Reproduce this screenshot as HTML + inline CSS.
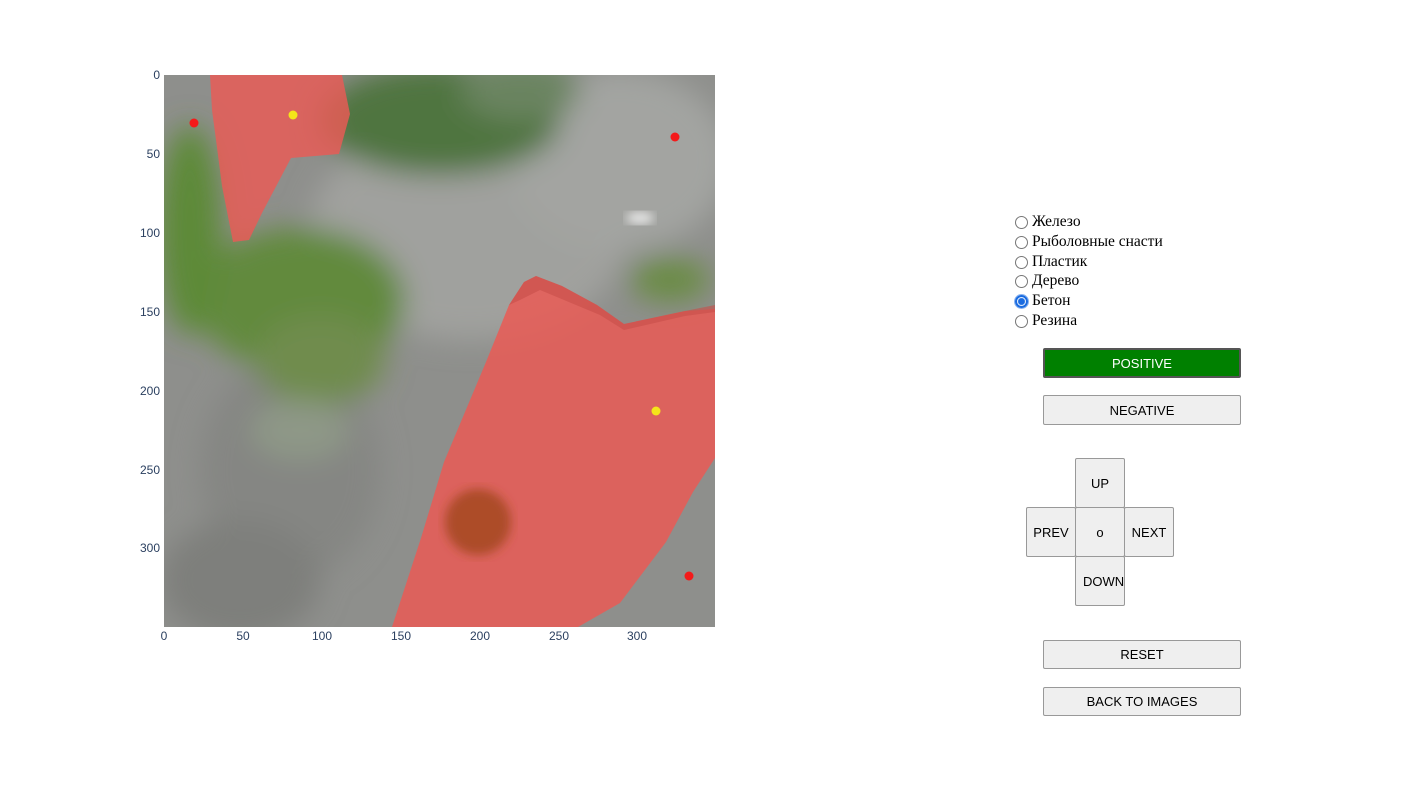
<!DOCTYPE html>
<html><head><meta charset="utf-8"><style>
body{margin:0;width:1417px;height:799px;background:#fff;position:relative;overflow:hidden;font-family:"Liberation Sans",sans-serif}
.yl{position:absolute;left:118px;width:42px;text-align:right;font-size:12px;color:#2a3f5f}
.xl{position:absolute;top:629px;width:40px;text-align:center;font-size:12px;color:#2a3f5f}
.rad{position:absolute;left:1015px;font-family:"Liberation Serif",serif;font-size:15.5px;color:#000;display:flex;align-items:center}
.rad i{display:inline-block;width:11px;height:11px;border:1px solid #777;border-radius:50%;margin-right:4px;background:#fff}
.btn{position:absolute;box-sizing:border-box;border:1px solid #999;border-radius:2px;background:#efefef;font-size:13px;color:#000;display:flex;align-items:center;justify-content:center}
</style></head><body>
<svg style="position:absolute;left:164px;top:75px" width="551" height="552" viewBox="164 75 551 552">
<defs>
<filter id="b" x="-30%" y="-30%" width="160%" height="160%"><feGaussianBlur stdDeviation="14"/></filter>
<filter id="b2"><feGaussianBlur stdDeviation="5"/></filter>
<clipPath id="c"><rect x="164" y="75" width="551" height="552"/></clipPath>
</defs>
<g clip-path="url(#c)">
<rect x="164" y="75" width="551" height="552" fill="#8e8f8c"/>
<g filter="url(#b)">
<ellipse cx="470" cy="230" rx="160" ry="110" fill="#a0a19e"/>
<ellipse cx="620" cy="160" rx="110" ry="90" fill="#a3a4a1"/>
<ellipse cx="290" cy="470" rx="90" ry="110" fill="#858683"/>
<ellipse cx="240" cy="580" rx="80" ry="60" fill="#7e7f7c"/>
<ellipse cx="300" cy="300" rx="105" ry="72" fill="#628a3e"/>
<ellipse cx="320" cy="360" rx="65" ry="45" fill="#6f8c4d"/>
<ellipse cx="190" cy="230" rx="32" ry="105" fill="#5d8a37"/>
<ellipse cx="440" cy="120" rx="120" ry="55" fill="#4f7540"/>
<ellipse cx="520" cy="90" rx="60" ry="30" fill="#6a8460"/>
<ellipse cx="300" cy="430" rx="50" ry="30" fill="#8e9887"/>
<ellipse cx="670" cy="280" rx="40" ry="22" fill="#6b8c45"/>
</g>
<ellipse cx="640" cy="218" rx="14" ry="6" fill="#e8e8e8" filter="url(#b2)"/>
<polygon fill="#ea5a55" fill-opacity="0.82" points="210,75 342,75 350,114 339,154 291,158 262,213 249,240 233,242 222,186 216,140 212,110"/>
<polygon fill="#ea5a55" fill-opacity="0.85" points="536,276 524,282 509,305 486,362 444,462 421,538 392,627 578,627 620,603 666,542 693,492 715,458 715,309 685,311 624,324 597,305 562,286"/>
<polygon fill="#c84e4a" fill-opacity="0.6" points="536,276 524,282 509,305 520,300 540,290 600,315 624,330 685,316 715,312 715,305 685,311 624,324 597,305 562,286"/>
<circle cx="478" cy="522" r="33" fill="#a4481c" fill-opacity="0.85" filter="url(#b2)"/>
<circle cx="194" cy="123" r="4.5" fill="#f41a1a"/>
<circle cx="675" cy="137" r="4.5" fill="#f41a1a"/>
<circle cx="689" cy="576" r="4.5" fill="#f41a1a"/>
<circle cx="293" cy="115" r="4.5" fill="#f4e51a"/>
<circle cx="656" cy="411" r="4.5" fill="#f4e51a"/>
</g>
</svg>
<div class="yl" style="top:68px">0</div>
<div class="yl" style="top:147px">50</div>
<div class="yl" style="top:226px">100</div>
<div class="yl" style="top:305px">150</div>
<div class="yl" style="top:384px">200</div>
<div class="yl" style="top:463px">250</div>
<div class="yl" style="top:541px">300</div>
<div class="xl" style="left:144px">0</div>
<div class="xl" style="left:223px">50</div>
<div class="xl" style="left:302px">100</div>
<div class="xl" style="left:381px">150</div>
<div class="xl" style="left:460px">200</div>
<div class="xl" style="left:539px">250</div>
<div class="xl" style="left:617px">300</div>
<div class="rad" style="top:213px"><i></i>Железо</div>
<div class="rad" style="top:233px"><i></i>Рыболовные снасти</div>
<div class="rad" style="top:253px"><i></i>Пластик</div>
<div class="rad" style="top:272px"><i></i>Дерево</div>
<div class="rad" style="top:292px"><i style="border:2px solid #1a6be0;width:9px;height:9px;background:radial-gradient(circle,#1a6be0 3px,#fff 4px);box-shadow:0 0 0 1px #8ab4f0"></i>Бетон</div>
<div class="rad" style="top:312px"><i></i>Резина</div>
<div class="btn" style="left:1043px;top:348px;width:198px;height:30px;background:#008000;color:#fff;border:2px solid #555">POSITIVE</div>
<div class="btn" style="left:1043px;top:395px;width:198px;height:30px">NEGATIVE</div>
<div class="btn" style="left:1075px;top:458px;width:50px;height:50px">UP</div>
<div class="btn" style="left:1026px;top:507px;width:50px;height:50px">PREV</div>
<div class="btn" style="left:1075px;top:507px;width:50px;height:50px">o</div>
<div class="btn" style="left:1124px;top:507px;width:50px;height:50px">NEXT</div>
<div class="btn" style="left:1075px;top:556px;width:50px;height:50px;justify-content:flex-start;padding-left:7px">DOWN</div>
<div class="btn" style="left:1043px;top:640px;width:198px;height:29px">RESET</div>
<div class="btn" style="left:1043px;top:687px;width:198px;height:29px">BACK TO IMAGES</div>
</body></html>
